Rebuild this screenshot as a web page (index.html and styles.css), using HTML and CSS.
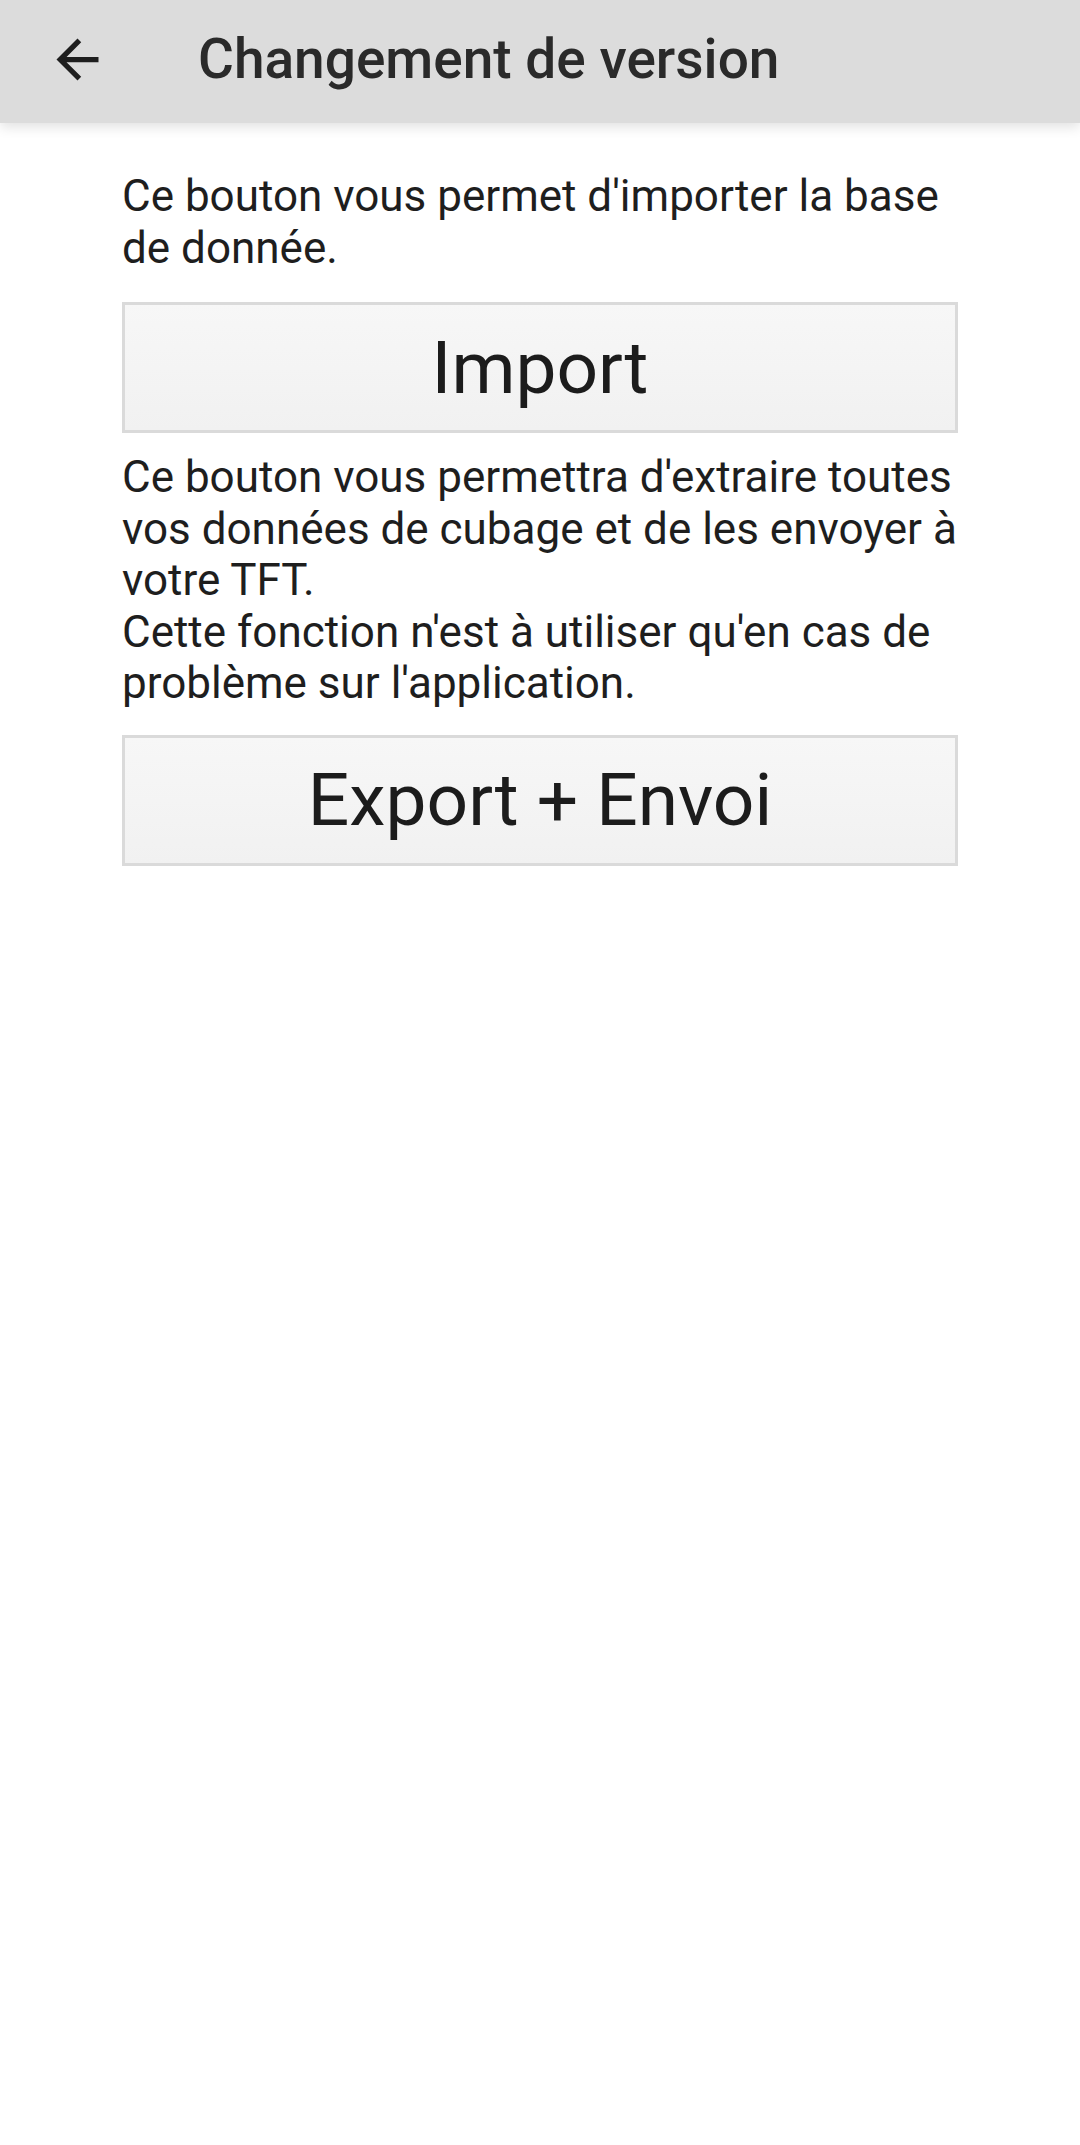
FILE: index.html
```html
<!DOCTYPE html>
<html lang="fr">
<head>
<meta charset="utf-8">
<title>Changement de version</title>
<link rel="stylesheet" href="styles.css">
</head>
<body>
<header class="appbar">
  <button class="back" aria-label="Retour">
    <svg viewBox="0 0 24 24" width="63" height="63"><path d="M20 11H7.83l5.59-5.59L12 4l-8 8 8 8 1.41-1.41L7.83 13H20v-2z" fill="#1e1e1e"/></svg>
  </button>
  <h1 class="title">Changement de version</h1>
</header>
<main class="content">
  <p class="desc">Ce bouton vous permet d'importer la base de donnée.</p>
  <button class="action">Import</button>
  <p class="desc desc-second">Ce bouton vous permettra d'extraire toutes vos données de cubage et de les envoyer à votre TFT.<br>Cette fonction n'est à utiliser qu'en cas de problème sur l'application.</p>
  <button class="action action-last">Export + Envoi</button>
</main>
</body>
</html>
```

FILE: styles.css
```css
html, body {
  margin: 0;
  padding: 0;
  background: #ffffff;
}
body {
  width: 1080px;
  min-height: 2145px;
  font-family: Roboto, "Noto Sans", "Liberation Sans", sans-serif;
  color: #1c1c1c;
}
.appbar {
  height: 123px;
  background: #dcdcdc;
  display: flex;
  align-items: center;
  box-shadow: 0 4px 12px rgba(0, 0, 0, 0.12);
  position: relative;
}
.back {
  width: 63px;
  height: 63px;
  margin: 0 0 5px 46px;
  padding: 0;
  border: 0;
  background: transparent;
  display: flex;
}
.title {
  margin: 0 0 6px 89px;
  font-size: 55px;
  font-weight: 500;
  color: #2a2a2a;
  letter-spacing: 0;
}
.content {
  padding: 48px 122px 0;
  display: flex;
  flex-direction: column;
}
.desc {
  margin: 0;
  font-size: 44px;
  line-height: 51.5px;
  color: #1e1e1e;
}
.desc-second {
  margin-top: 19px;
}
.action {
  margin-top: 28px;
  height: 131px;
  width: 836px;
  border: 3px solid #dadada;
  background: linear-gradient(#f7f7f7, #f1f1f1);
  font-family: Roboto, "Noto Sans", "Liberation Sans", sans-serif;
  font-size: 73px;
  color: #1c1c1c;
  padding: 0;
}
.action-last {
  margin-top: 25px;
}
```
